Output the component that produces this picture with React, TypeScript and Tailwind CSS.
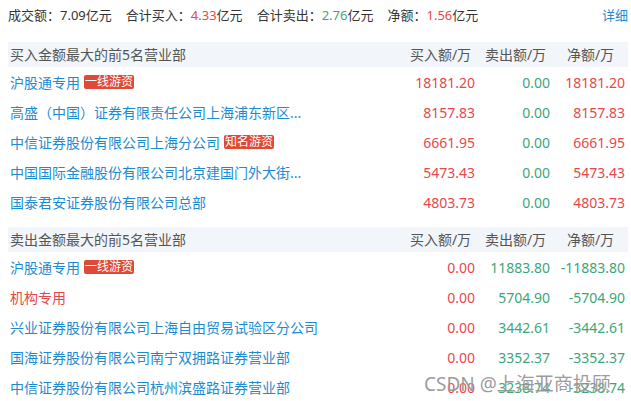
import React from "react";

type Row = { name: string; tag?: string; nameRed?: boolean; buy: string; sell: string; net: string; netUp: boolean };

const buyRows: Row[] = [
  { name: "沪股通专用", tag: "一线游资", buy: "18181.20", sell: "0.00", net: "18181.20", netUp: true },
  { name: "高盛（中国）证券有限责任公司上海浦东新区营业部", buy: "8157.83", sell: "0.00", net: "8157.83", netUp: true },
  { name: "中信证券股份有限公司上海分公司", tag: "知名游资", buy: "6661.95", sell: "0.00", net: "6661.95", netUp: true },
  { name: "中国国际金融股份有限公司北京建国门外大街证券营业部", buy: "5473.43", sell: "0.00", net: "5473.43", netUp: true },
  { name: "国泰君安证券股份有限公司总部", buy: "4803.73", sell: "0.00", net: "4803.73", netUp: true },
];

const sellRows: Row[] = [
  { name: "沪股通专用", tag: "一线游资", buy: "0.00", sell: "11883.80", net: "-11883.80", netUp: false },
  { name: "机构专用", nameRed: true, buy: "0.00", sell: "5704.90", net: "-5704.90", netUp: false },
  { name: "兴业证券股份有限公司上海自由贸易试验区分公司", buy: "0.00", sell: "3442.61", net: "-3442.61", netUp: false },
  { name: "国海证券股份有限公司南宁双拥路证券营业部", buy: "0.00", sell: "3352.37", net: "-3352.37", netUp: false },
  { name: "中信证券股份有限公司杭州滨盛路证券营业部", buy: "0.00", sell: "3238.74", net: "-3238.74", netUp: false },
];

function shortName(n: string) {
  return n.length > 22 ? n.slice(0, 20) + "..." : n;
}

function Header({ title }: { title: string }) {
  return (
    <div className="flex h-[25px] items-center bg-[#f2f6fa] text-[14px] text-[#555]">
      <div className="flex-1 pl-[2px]">{title}</div>
      <div className="w-[75px] text-center">买入额/万</div>
      <div className="w-[75px] text-center">卖出额/万</div>
      <div className="w-[75px] text-center">净额/万</div>
    </div>
  );
}

function DataRow({ r }: { r: Row }) {
  return (
    <div className="flex h-[30px] items-center text-[14px]">
      <div className="flex min-w-0 flex-1 items-center pl-[2px]">
        <span className={`whitespace-nowrap ${r.nameRed ? "text-[#e5474b]" : "text-[#1d8bd1]"}`}>{shortName(r.name)}</span>
        {r.tag && (
          <span className="ml-[4px] inline-flex h-[14px] items-center rounded-[2px] bg-[#dd4a37] px-[1px] text-[12px] leading-none text-white">
            {r.tag}
          </span>
        )}
      </div>
      <div className="w-[75px] pr-[3px] text-right text-[#e8474c]">{r.buy}</div>
      <div className="w-[75px] pr-[3px] text-right text-[#3ea57c]">{r.sell}</div>
      <div className={`w-[75px] pr-[3px] text-right ${r.netUp ? "text-[#e8474c]" : "text-[#3ea57c]"}`}>{r.net}</div>
    </div>
  );
}

export default function App() {
  return (
    <div
      className="relative h-[401px] w-[631px] overflow-hidden bg-white pl-[8px] pr-[3px]"
      style={{ fontFamily: '"Noto Sans", "Noto Sans CJK SC", sans-serif' }}
    >
      <div className="flex h-[32px] items-center text-[13px] text-[#333]">
        <span>成交额：7.09亿元</span>
        <span className="ml-[14px]">合计买入：<span className="text-[#e8474c]">4.33</span>亿元</span>
        <span className="ml-[14px]">合计卖出：<span className="text-[#3ea57c]">2.76</span>亿元</span>
        <span className="ml-[14px]">净额：<span className="text-[#e8474c]">1.56</span>亿元</span>
        <span className="ml-auto text-[#1d8bd1]">详细</span>
      </div>
      <div className="mt-[10px]">
        <Header title="买入金额最大的前5名营业部" />
        {buyRows.map((r, i) => (
          <DataRow key={i} r={r} />
        ))}
      </div>
      <div className="mt-[10px]">
        <Header title="卖出金额最大的前5名营业部" />
        {sellRows.map((r, i) => (
          <DataRow key={i} r={r} />
        ))}
      </div>
      <div
        className="absolute left-[424px] top-[370px] text-[19px] text-[rgba(110,110,110,0.7)]"
        style={{ textShadow: "0 0 1px rgba(255,255,255,0.8)" }}
      >
        CSDN @上海亚商投顾
      </div>
    </div>
  );
}
